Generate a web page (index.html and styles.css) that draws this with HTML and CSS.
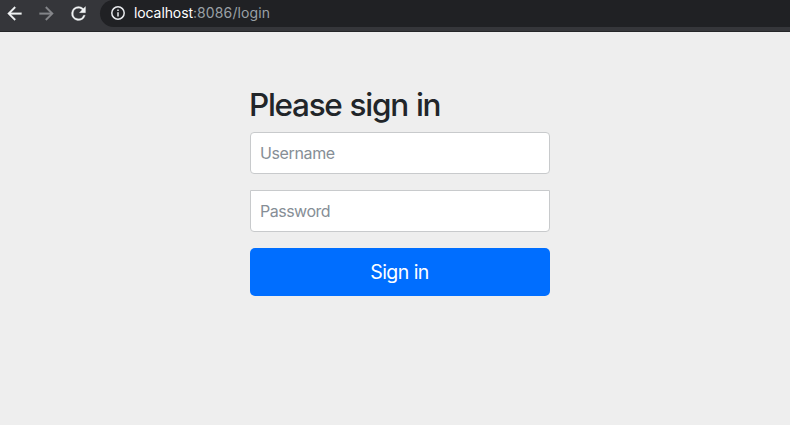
FILE: index.html
```html
<!DOCTYPE html>
<html lang="en">
<head>
<meta charset="utf-8">
<title>Please sign in</title>
<link rel="stylesheet" href="styles.css">
</head>
<body>
<header class="toolbar">
  <nav class="nav">
    <svg class="nav-icon" viewBox="0 0 24 24"><path d="M20 11H7.83l5.59-5.59L12 4l-8 8 8 8 1.41-1.41L7.83 13H20z"/></svg>
    <svg class="nav-icon nav-icon-off" viewBox="0 0 24 24"><path d="M12 4l-1.41 1.41L16.17 11H4v2h12.17l-5.58 5.59L12 20l8-8z"/></svg>
    <svg class="nav-icon" viewBox="0 0 24 24"><path d="M17.65 6.35A7.96 7.96 0 0 0 12 4a8 8 0 1 0 7.73 10h-2.08A6 6 0 1 1 12 6c1.66 0 3.14.69 4.22 1.78L13 11h7V4z"/></svg>
  </nav>
  <div class="address">
    <svg class="info" viewBox="0 0 14 14"><circle cx="7" cy="7" r="6.2"/><path d="M7 6.2v4.2M7 3.6v1.5"/></svg>
    <span class="url"><span class="host">localhost</span>:8086/login</span>
  </div>
</header>
<main class="page">
  <form class="signin">
    <h2 class="title">Please sign in</h2>
    <input class="field username" type="text" placeholder="Username" aria-label="Username">
    <input class="field password" type="password" placeholder="Password" aria-label="Password">
    <button class="submit" type="button">Sign in</button>
  </form>
</main>
</body>
</html>
```
FILE: styles.css
```css
* { box-sizing: border-box; }
body {
  margin: 0;
  height: 425px;
  overflow: hidden;
  background: #eee;
  color: #212529;
  font-family: Inter, "Liberation Sans", sans-serif;
}
.toolbar {
  display: flex;
  align-items: flex-start;
  height: 32px;
  background: #35363a;
  border-bottom: 1px solid #242528;
}
.nav {
  display: flex;
  gap: 11px;
  width: 100px;
  padding: 2.5px 0 0 3.5px;
}
.nav-icon { width: 21px; height: 21px; fill: #f1f3f4; stroke: #f1f3f4; stroke-width: 0.3; flex: none; }
.nav-icon-off { fill: #85868a; stroke: #85868a; }
.address {
  display: flex;
  align-items: flex-start;
  flex: 1;
  gap: 9px;
  height: 27px;
  padding: 0 0 0 11px;
  background: #202124;
  border-radius: 14px 0 0 14px;
}
.info { width: 14px; height: 14px; margin-top: 6px; fill: none; stroke: #e8eaed; stroke-width: 1.5; }
.url { font-size: 14px; line-height: 26px; color: #9aa0a6; letter-spacing: 0.12px; }
.host { color: #fff; letter-spacing: -0.1px; }
.page { display: flex; justify-content: center; padding: 54px 0 0 10px; }
.signin { display: flex; flex-direction: column; width: 300px; }
.title {
  margin: 0 0 8px -1px;
  font-size: 31.5px;
  font-weight: 540;
  line-height: 38px;
  letter-spacing: -1.3px;
  word-spacing: 1px;
  white-space: nowrap;
}
.field {
  width: 100%;
  height: 42px;
  margin: 0 0 16px;
  padding: 0 9px;
  border: 1px solid #c8cacc;
  border-radius: 4px;
  background: #fff;
  font: 16px Inter, "Liberation Sans", sans-serif;
  letter-spacing: -0.37px;
  outline: none;
}
.password { border-radius: 0 0 4px 4px; letter-spacing: -0.5px; }
.field::placeholder { color: #868e96; opacity: 1; }
.submit {
  height: 48px;
  padding: 0 1px 0 0;
  border: 0;
  border-radius: 5px;
  background: #006eff;
  color: #fff;
  font: 19.5px Inter, "Liberation Sans", sans-serif;
  letter-spacing: -0.55px;
}
```
